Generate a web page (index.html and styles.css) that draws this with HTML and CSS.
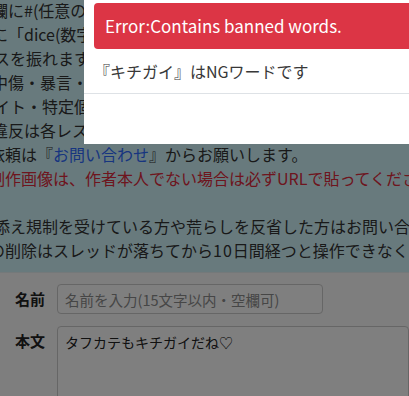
FILE: index.html
```html
<!DOCTYPE html>
<html lang="ja">

<head>
    <meta charset="UTF-8">
    <meta name="viewport" content="width=device-width, initial-scale=1.0">
    <link rel="stylesheet" href="styles.css">
    <title>書き込み</title>
</head>

<body>
    <!-- 注意書き -->
    <div class="notice">
        <div class="line">欄に#(任意の文字列)を入力するとトリップが付きます。</div>
        <div class="line">に「dice(数字)d(数字)」と書くとダイスが振れます。</div>
        <div class="line line-near">スを振れます。</div>
        <div class="line">中傷・暴言・差別的な書き込みは禁止です。</div>
        <div class="line line-near">イト・特定個人の晒しは禁止です。</div>
        <div class="line">違反は各レスの通報ボタンから報告してください。</div>
        <div class="line line-far">依頼は『<a href="#" class="link">お問い合わせ</a>』からお願いします。</div>
        <div class="line line-far warn">制作画像は、作者本人でない場合は必ずURLで貼ってください。</div>
        <div class="line blank"></div>
        <div class="line line-near">添え規制を受けている方や荒らしを反省した方はお問い合わせください。</div>
        <div class="line line-far">の削除はスレッドが落ちてから<span class="num">10</span>日間経つと操作できなくなります。</div>
    </div>

    <!-- 投稿フォーム -->
    <form class="post-form">
        <div class="form-row">
            <label class="form-label" for="name">名前</label>
            <input type="text" id="name" class="name-input" placeholder="名前を入力(15文字以内・空欄可)">
        </div>
        <div class="form-row">
            <label class="form-label" for="body">本文</label>
            <textarea id="body" class="body-input">タフカテもキチガイだね♡</textarea>
        </div>
    </form>

    <!-- エラーダイアログ -->
    <div class="backdrop"></div>
    <div class="modal">
        <div class="modal-header">Error:Contains banned words.</div>
        <div class="modal-body">『キチガイ』はNGワードです</div>
        <div class="modal-footer"></div>
    </div>
</body>

</html>
```

FILE: styles.css
```css
/* General */
body {
    font-family: "Noto Sans CJK JP", "Noto Sans", sans-serif;
    background-color: #ffffff;
    color: #333;
    margin: 0;
    overflow: hidden;
}

.notice {
    margin-top: -2px;
    padding-bottom: 10px;
    background-color: #d1f5fb;
    border-bottom: 1px solid #e9f3f5;
    font-size: 16px;
    line-height: 24px;
}

.line {
    white-space: nowrap;
    margin-left: -8px;
}

.line-near {
    margin-left: -6px;
}

.line-far {
    margin-left: -11px;
}

.blank {
    height: 24px;
}

.num {
    letter-spacing: 1px;
}

.link {
    color: #2f6bff;
    text-decoration: none;
}

.warn {
    color: #dc2a3c;
}

.post-form {
    background-color: #fcfcfc;
    padding: 11px 0 0 15px;
    display: flex;
    flex-direction: column;
    gap: 12px;
}

.form-row {
    display: flex;
    align-items: flex-start;
}

.form-label {
    width: 42px;
    flex-shrink: 0;
    font-size: 15px;
    font-weight: bold;
    line-height: 30px;
    color: #222;
}

.name-input {
    width: 266px;
    height: 30px;
    box-sizing: border-box;
    padding: 0 7px;
    border: 1px solid #ccc;
    border-radius: 4px;
    background: #fff;
    font-family: inherit;
    font-size: 14.5px;
    color: #222;
}

.name-input::placeholder {
    color: #8c8c8c;
}

.body-input {
    width: 400px;
    height: 120px;
    box-sizing: border-box;
    padding: 4px 7px;
    border: 1px solid #ccc;
    border-radius: 4px;
    background: #fff;
    font-family: inherit;
    font-size: 14px;
    line-height: 22px;
    color: #222;
    resize: none;
}

/* ダイアログ */
.backdrop {
    position: fixed;
    inset: 0;
    background-color: rgba(0, 0, 0, 0.5);
}

.modal {
    position: fixed;
    top: -7px;
    left: 84px;
    width: 420px;
    padding-top: 10px;
    background: #ffffff;
}

.modal-header {
    margin: 0 10px;
    padding: 10px 11px;
    background-color: #dc3545;
    color: #ffffff;
    border-radius: 4px;
    font-size: 17px;
    line-height: 26px;
}

.modal-body {
    padding: 10px;
    font-size: 16px;
    line-height: 24px;
    color: #383838;
    border-bottom: 1px solid #dee2e6;
}

.modal-footer {
    height: 50px;
}
```
